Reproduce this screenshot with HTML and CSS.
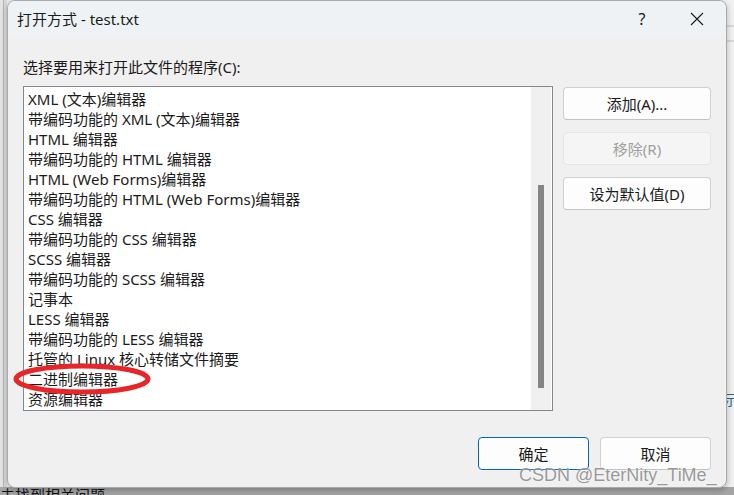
FILE: index.html
```html
<!DOCTYPE html>
<html lang="zh-CN">
<head>
    <meta charset="UTF-8">
    <meta name="viewport" content="width=device-width, initial-scale=1.0">
    <title>打开方式 - test.txt</title>
    <link rel="stylesheet" href="styles.css">
</head>
<body>
    <div class="desktop">
        <div class="desk-left"></div>
        <div class="desk-right">
            <span class="desk-glyph">示</span>
        </div>
        <div class="desk-bottom">未找到相关问题</div>

        <div class="dialog">
            <div class="titlebar">
                <span class="title">打开方式 - test.txt</span>
                <span class="title-help">?</span>
                <span class="title-close">
                    <svg width="14" height="14" viewBox="0 0 14 14">
                        <path d="M1 1 L13 13 M13 1 L1 13" stroke="#1a1a1a" stroke-width="1.1" fill="none"/>
                    </svg>
                </span>
            </div>

            <div class="dialog-body">
                <div class="label">选择要用来打开此文件的程序(C):</div>

                <div class="main-row">
                    <div class="listbox">
                        <ul class="items">
                            <li>XML (文本)编辑器</li>
                            <li>带编码功能的 XML (文本)编辑器</li>
                            <li>HTML 编辑器</li>
                            <li>带编码功能的 HTML 编辑器</li>
                            <li>HTML (Web Forms)编辑器</li>
                            <li>带编码功能的 HTML (Web Forms)编辑器</li>
                            <li>CSS 编辑器</li>
                            <li>带编码功能的 CSS 编辑器</li>
                            <li>SCSS 编辑器</li>
                            <li>带编码功能的 SCSS 编辑器</li>
                            <li>记事本</li>
                            <li>LESS 编辑器</li>
                            <li>带编码功能的 LESS 编辑器</li>
                            <li>托管的 Linux 核心转储文件摘要</li>
                            <li>二进制编辑器</li>
                            <li>资源编辑器</li>
                        </ul>
                        <div class="scrollbar">
                            <div class="thumb"></div>
                        </div>
                    </div>

                    <div class="side-buttons">
                        <button class="btn">添加(A)...</button>
                        <button class="btn" disabled>移除(R)</button>
                        <button class="btn">设为默认值(D)</button>
                    </div>
                </div>

                <div class="footer">
                    <button class="btn btn-default">确定</button>
                    <button class="btn">取消</button>
                </div>
            </div>
        </div>

        <!-- red mark drawn on the screenshot -->
        <svg class="mark" width="146" height="38" viewBox="0 0 146 38">
            <ellipse cx="73" cy="19" rx="66" ry="13" stroke="#e8262a" stroke-width="5" fill="none"/>
        </svg>

        <div class="watermark">CSDN @EterNity_TiMe_</div>
    </div>
</body>
</html>
```

FILE: styles.css
```css
body {
    margin: 0;
    font-family: "Noto Sans", "Noto Sans CJK SC", sans-serif;
    font-size: 15px;
    color: #1a1a1a;
}

.desktop {
    position: relative;
    width: 734px;
    height: 495px;
    overflow: hidden;
    background-color: #ececec;
}

.desk-left {
    position: absolute;
    left: 0;
    top: 0;
    width: 7px;
    height: 487px;
    background: linear-gradient(90deg, #e4e4e4 0, #e4e4e4 3px, #b4b4b4 3px, #b4b4b4 4px, #dadada 4px);
}

.desk-right {
    position: absolute;
    right: 0;
    top: 0;
    width: 10px;
    height: 487px;
    background-color: #f1f1f1;
    border-top: 1px solid transparent;
}

.desk-right::before {
    content: "";
    display: block;
    margin-top: 24px;
    height: 2px;
    background-color: #d8d8d8;
}

.desk-right::after {
    content: "";
    display: block;
    margin-top: 13px;
    height: 2px;
    background-color: #d8d8d8;
}

.desk-glyph {
    position: absolute;
    left: 0;
    top: 388px;
    font-size: 14px;
    color: #1f6e8c;
}

.desk-bottom {
    position: absolute;
    left: 0;
    top: 487px;
    width: 734px;
    height: 8px;
    background-color: #a4a4a4;
    font-size: 15px;
    line-height: 16px;
    color: #111;
    overflow: hidden;
}

.dialog {
    position: absolute;
    left: 7px;
    top: 0;
    width: 720px;
    height: 488px;
    box-sizing: border-box;
    border: 1px solid #a9a9a9;
    border-radius: 8px;
    background-color: #f0f0f0;
    overflow: hidden;
    box-shadow: 0 2px 6px rgba(0, 0, 0, 0.25);
}

.titlebar {
    display: flex;
    align-items: center;
    height: 36px;
    padding-left: 9px;
    background-color: #eef2f5;
}

.title {
    flex: 1;
    font-size: 15px;
    padding-bottom: 1px;
}

.title-help {
    width: 20px;
    margin-right: 38px;
    font-size: 16px;
    text-align: center;
}

.title-close {
    display: flex;
    width: 14px;
    margin-right: 22px;
}

.dialog-body {
    padding: 20px 15px 0 15px;
}

.label {
    line-height: 20px;
    margin-bottom: 9px;
}

.main-row {
    display: flex;
    gap: 10px;
}

.listbox {
    display: flex;
    width: 530px;
    height: 325px;
    box-sizing: border-box;
    border: 1px solid #828790;
    background-color: #ffffff;
    overflow: hidden;
}

.items {
    flex: 1;
    list-style: none;
    margin: 0;
    padding: 2px 0 0 4px;
}

.items li {
    height: 20px;
    line-height: 20px;
    white-space: nowrap;
}

.scrollbar {
    width: 20px;
    margin-right: 1px;
    background-color: #f0f0f0;
    padding-top: 98px;
    box-sizing: border-box;
}

.thumb {
    width: 6px;
    height: 203px;
    margin-left: 7px;
    background-color: #858585;
}

.side-buttons {
    display: flex;
    flex-direction: column;
    gap: 12px;
    width: 148px;
    padding-top: 1px;
}

.btn {
    height: 33px;
    padding: 0;
    border: 1px solid #d0d0d0;
    border-bottom-color: #c2c2c2;
    border-radius: 4px;
    background-color: #fdfdfd;
    font-family: "Noto Sans", "Noto Sans CJK SC", sans-serif;
    font-size: 15px;
    color: #1a1a1a;
}

.btn:disabled {
    background-color: #f5f5f5;
    border-color: #e5e5e5;
    color: #a0a0a0;
}

.footer {
    display: flex;
    justify-content: flex-end;
    gap: 11px;
    margin-top: 26px;
}

.footer .btn {
    width: 111px;
}

.btn-default {
    border: 1px solid #0067c0;
}

.mark {
    position: absolute;
    left: 9px;
    top: 360px;
}

.watermark {
    position: absolute;
    left: 519px;
    top: 465px;
    font-family: "Liberation Sans", sans-serif;
    font-size: 18px;
    color: rgba(120, 120, 120, 0.75);
    text-shadow: 0 0 2px #ffffff;
    white-space: nowrap;
}
```
